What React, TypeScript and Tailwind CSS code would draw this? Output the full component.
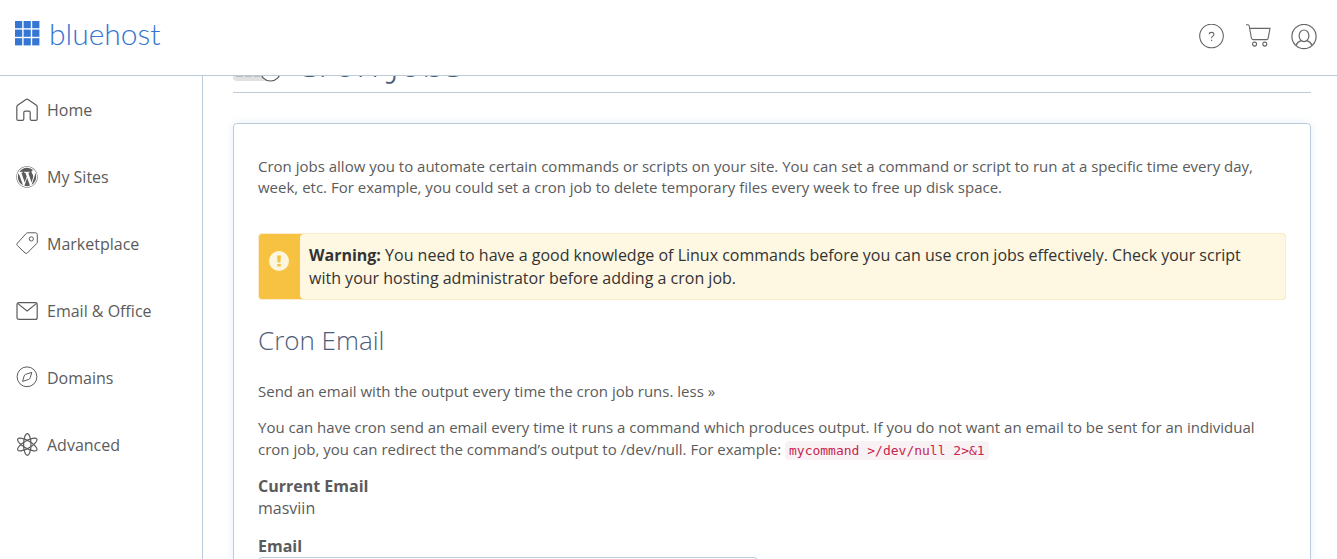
import React from 'react';
import { FaWordpress } from 'react-icons/fa';

const HomeIcon = () => (
  <svg width="22" height="24" viewBox="0 0 22 24" fill="none" stroke="currentColor" strokeWidth="1.2">
    <path d="M10 1.5 1.6 7.3Q.8 8 .8 9V21Q.8 22.4 2.2 22.4H6.4Q7.8 22.4 7.8 21V14.6Q7.8 13.2 9.2 13.2H12.8Q14.2 13.2 14.2 14.6V21Q14.2 22.4 15.6 22.4H19.8Q21.2 22.4 21.2 21V9Q21.2 8 20.4 7.3L12 1.5Q11 .8 10 1.5Z" />
  </svg>
);

const TagIcon = () => (
  <svg width="22" height="24" viewBox="0 0 22 24" fill="none" stroke="currentColor" strokeWidth="1">
    <path d="M11.6 .8H19.5Q21.3 .8 21.3 2.7V10.1Q21.3 10.9 20.7 11.5L11.4 20.9Q10.2 22 9 20.9L1.4 13.5Q.2 12.3 1.4 11.1L10.2 1.5Q10.8 .8 11.6 .8Z" />
    <circle cx="15.3" cy="6.9" r="2.1" />
  </svg>
);

const MailIcon = () => (
  <svg width="22" height="24" viewBox="0 0 22 24" fill="none" stroke="currentColor" strokeWidth="1.2">
    <rect x="1" y="3.6" width="20.2" height="16.8" rx="2" />
    <path d="m1.6 4.4 9.5 7.6 9.5-7.6" />
  </svg>
);

const CompassIcon = () => (
  <svg width="22" height="24" viewBox="0 0 22 24" fill="none" stroke="currentColor" strokeWidth="1">
    <circle cx="11" cy="10.8" r="9.9" />
    <path d="M15.8 6.4 14.2 11.8Q13.9 13 12.8 13.4L6.6 15.4 8.1 10Q8.5 8.8 9.7 8.3Z" />
  </svg>
);

const AtomIcon = () => (
  <svg width="22" height="24" viewBox="0 0 22 24" fill="none" stroke="currentColor" strokeWidth="1.2">
    <ellipse cx="11.3" cy="11.5" rx="3.7" ry="10.8" />
    <ellipse cx="11.3" cy="11.5" rx="3.7" ry="11" transform="rotate(60 11.3 11.5)" />
    <ellipse cx="11.3" cy="11.5" rx="3.7" ry="11" transform="rotate(-60 11.3 11.5)" />
  </svg>
);

const navItems = [
  { label: 'Home', icon: <HomeIcon /> },
  { label: 'My Sites', icon: <FaWordpress size={22} /> },
  { label: 'Marketplace', icon: <TagIcon /> },
  { label: 'Email & Office', icon: <MailIcon /> },
  { label: 'Domains', icon: <CompassIcon /> },
  { label: 'Advanced', icon: <AtomIcon /> },
];

const Header: React.FC = () => (
  <header className="flex shrink-0 items-start justify-between border-b border-[#bccbd9] bg-white pt-3 pb-5 pl-[15px] pr-5">
    <a href="#" className="flex items-center gap-[9px] text-[#3575d3]" aria-label="bluehost">
      <svg width="25" height="25" viewBox="0 0 25 25" fill="currentColor">
        {[0, 8.6, 17.2].map((y) =>
          [0, 8.6, 17.2].map((x) => <rect key={`${x}-${y}`} x={x} y={y} width="7.2" height="7.2" />)
        )}
      </svg>
      <span className="font-['Lato','Open_Sans',sans-serif] text-[30px] leading-[43px] font-light">bluehost</span>
    </a>
    <div className="flex items-center gap-5 pt-3 text-[#666]">
      <button type="button" aria-label="Help">
        <svg width="26" height="26" viewBox="0 0 26 26" fill="none" stroke="currentColor" strokeWidth="1.1">
          <circle cx="12.5" cy="12" r="11.8" />
          <path d="M10.3 10.2Q10.3 8.4 12.6 8.4T14.9 10.6Q14.9 11.8 13.4 12.4 12.6 12.9 12.6 14.2M12.6 15.8V17" />
        </svg>
      </button>
      <button type="button" aria-label="Cart">
        <svg width="26" height="26" viewBox="0 0 26 26" fill="none" stroke="currentColor" strokeWidth="1.1">
          <path d="M1 .7H3Q4 .7 4.2 2L6.4 14Q6.7 15.6 8 15.6H21.6Q22.9 15.6 23.2 14.2L25 4.4H4.6" />
          <circle cx="9.6" cy="20.1" r="2" />
          <circle cx="19.8" cy="20.1" r="2" />
        </svg>
      </button>
      <button type="button" aria-label="Account">
        <svg width="26" height="26" viewBox="0 0 26 26" fill="none" stroke="currentColor" strokeWidth="1.2">
          <circle cx="13" cy="12.5" r="12.1" />
          <ellipse cx="13" cy="11.8" rx="4.9" ry="5.8" />
          <path d="M5 21.5Q6.2 18 10 16.6M21 21.5Q19.8 18 16 16.6" />
        </svg>
      </button>
    </div>
  </header>
);

const Sidebar: React.FC = () => (
  <nav className="w-[203px] shrink-0 border-r border-[#bccbd9] pt-[22px] pl-4">
    <ul className="space-y-[43px]">
      {navItems.map((item) => (
        <li key={item.label}>
          <a href="#" className="flex h-6 items-center gap-[9px] text-base leading-6">
            {item.icon}
            <span>{item.label}</span>
          </a>
        </li>
      ))}
    </ul>
  </nav>
);

const App: React.FC = () => {
  return (
    <div className="flex h-screen flex-col overflow-hidden bg-white font-['Open_Sans',sans-serif] text-[#5b5b5b]">
      <Header />
      <div className="flex min-h-0 flex-1">
        <Sidebar />
        <main className="min-w-0 flex-1 overflow-hidden pl-[30px] pr-[26px]">
          {/* Page title, scrolled up under the header */}
          <div className="flex h-[17px] items-end gap-[14px] overflow-hidden border-b border-[#bccbd9] pb-[10px]">
            <svg className="shrink-0" width="47" height="48" viewBox="0 0 47 48" fill="none">
              <rect x="0" y="6" width="36" height="41" rx="4" fill="#e1e1e1" />
              <path d="M3 42.5H27" stroke="#bdbdbd" strokeWidth="1" strokeDasharray="7 2" />
              <circle cx="37.5" cy="37" r="10" fill="#fff" stroke="#555" strokeWidth="1.2" />
            </svg>
            <h1 className="text-[39px] leading-10 font-light text-[#4c5d78]">Cron Jobs</h1>
          </div>

          <section className="mt-[30px] h-[600px] rounded border border-[#bccbd9] px-6 pt-8 text-[15px] leading-[22px] shadow-[0_0_10px_#e6eef7]">
            <p className="leading-[21px]">
              Cron jobs allow you to automate certain commands or scripts on your site. You can set a command or
              script to run at a specific time every day, week, etc. For example, you could set a cron job to delete
              temporary files every week to free up disk space.
            </p>

            <div role="alert" className="mt-[35px] flex overflow-hidden rounded border border-[#faebcc] bg-[#f7c242] text-base leading-[23px] text-[#333]">
              <div className="w-[41px] shrink-0 pt-[17px] pl-[10px]">
                <svg width="20" height="20" viewBox="0 0 20 20">
                  <circle cx="10" cy="10" r="10" fill="#fdf6df" />
                  <path d="M8 4.5H12L11.4 11.6H8.6ZM8.2 13H11.8V15.6H8.2Z" fill="#f7c242" />
                </svg>
              </div>
              <p className="flex-1 rounded-l bg-[#fef7e2] pt-[10px] pr-6 pb-[9px] pl-[9px]">
                <strong className="font-bold">Warning:</strong> You need to have a good knowledge of Linux commands
                before you can use cron jobs effectively. Check your script with your hosting administrator before
                adding a cron job.
              </p>
            </div>

            <h2 className="mt-[22px] text-[26px] leading-9 font-light text-[#4c5d78]">Cron Email</h2>
            <p className="mt-[22px]">
              Send an email with the output every time the cron job runs. <a href="#">less »</a>
            </p>
            <p className="mt-[14px]">
              You can have cron send an email every time it runs a command which produces output. If you do not want
              an email to be sent for an individual cron job, you can redirect the command’s output to /dev/null. For
              example:{' '}
              <code className="rounded bg-[#f9f2f4] px-1 py-[2px] font-['DejaVu_Sans_Mono',monospace] text-[13px] leading-4 text-[#c7254e]">
                mycommand &gt;/dev/null 2&gt;&amp;1
              </code>
            </p>

            <div className="mt-[15px] text-base leading-[22px]">
              <strong className="block font-bold">Current Email</strong>
              <span className="block">masviin</span>
            </div>
            <form className="mt-4 text-base leading-[22px]">
              <label htmlFor="cron-email" className="block font-bold">
                Email
              </label>
              <input id="cron-email" type="email" className="h-9 w-[500px] rounded border border-[#bccbd9] px-3" />
            </form>
          </section>
        </main>
      </div>
    </div>
  );
};

export default App;
